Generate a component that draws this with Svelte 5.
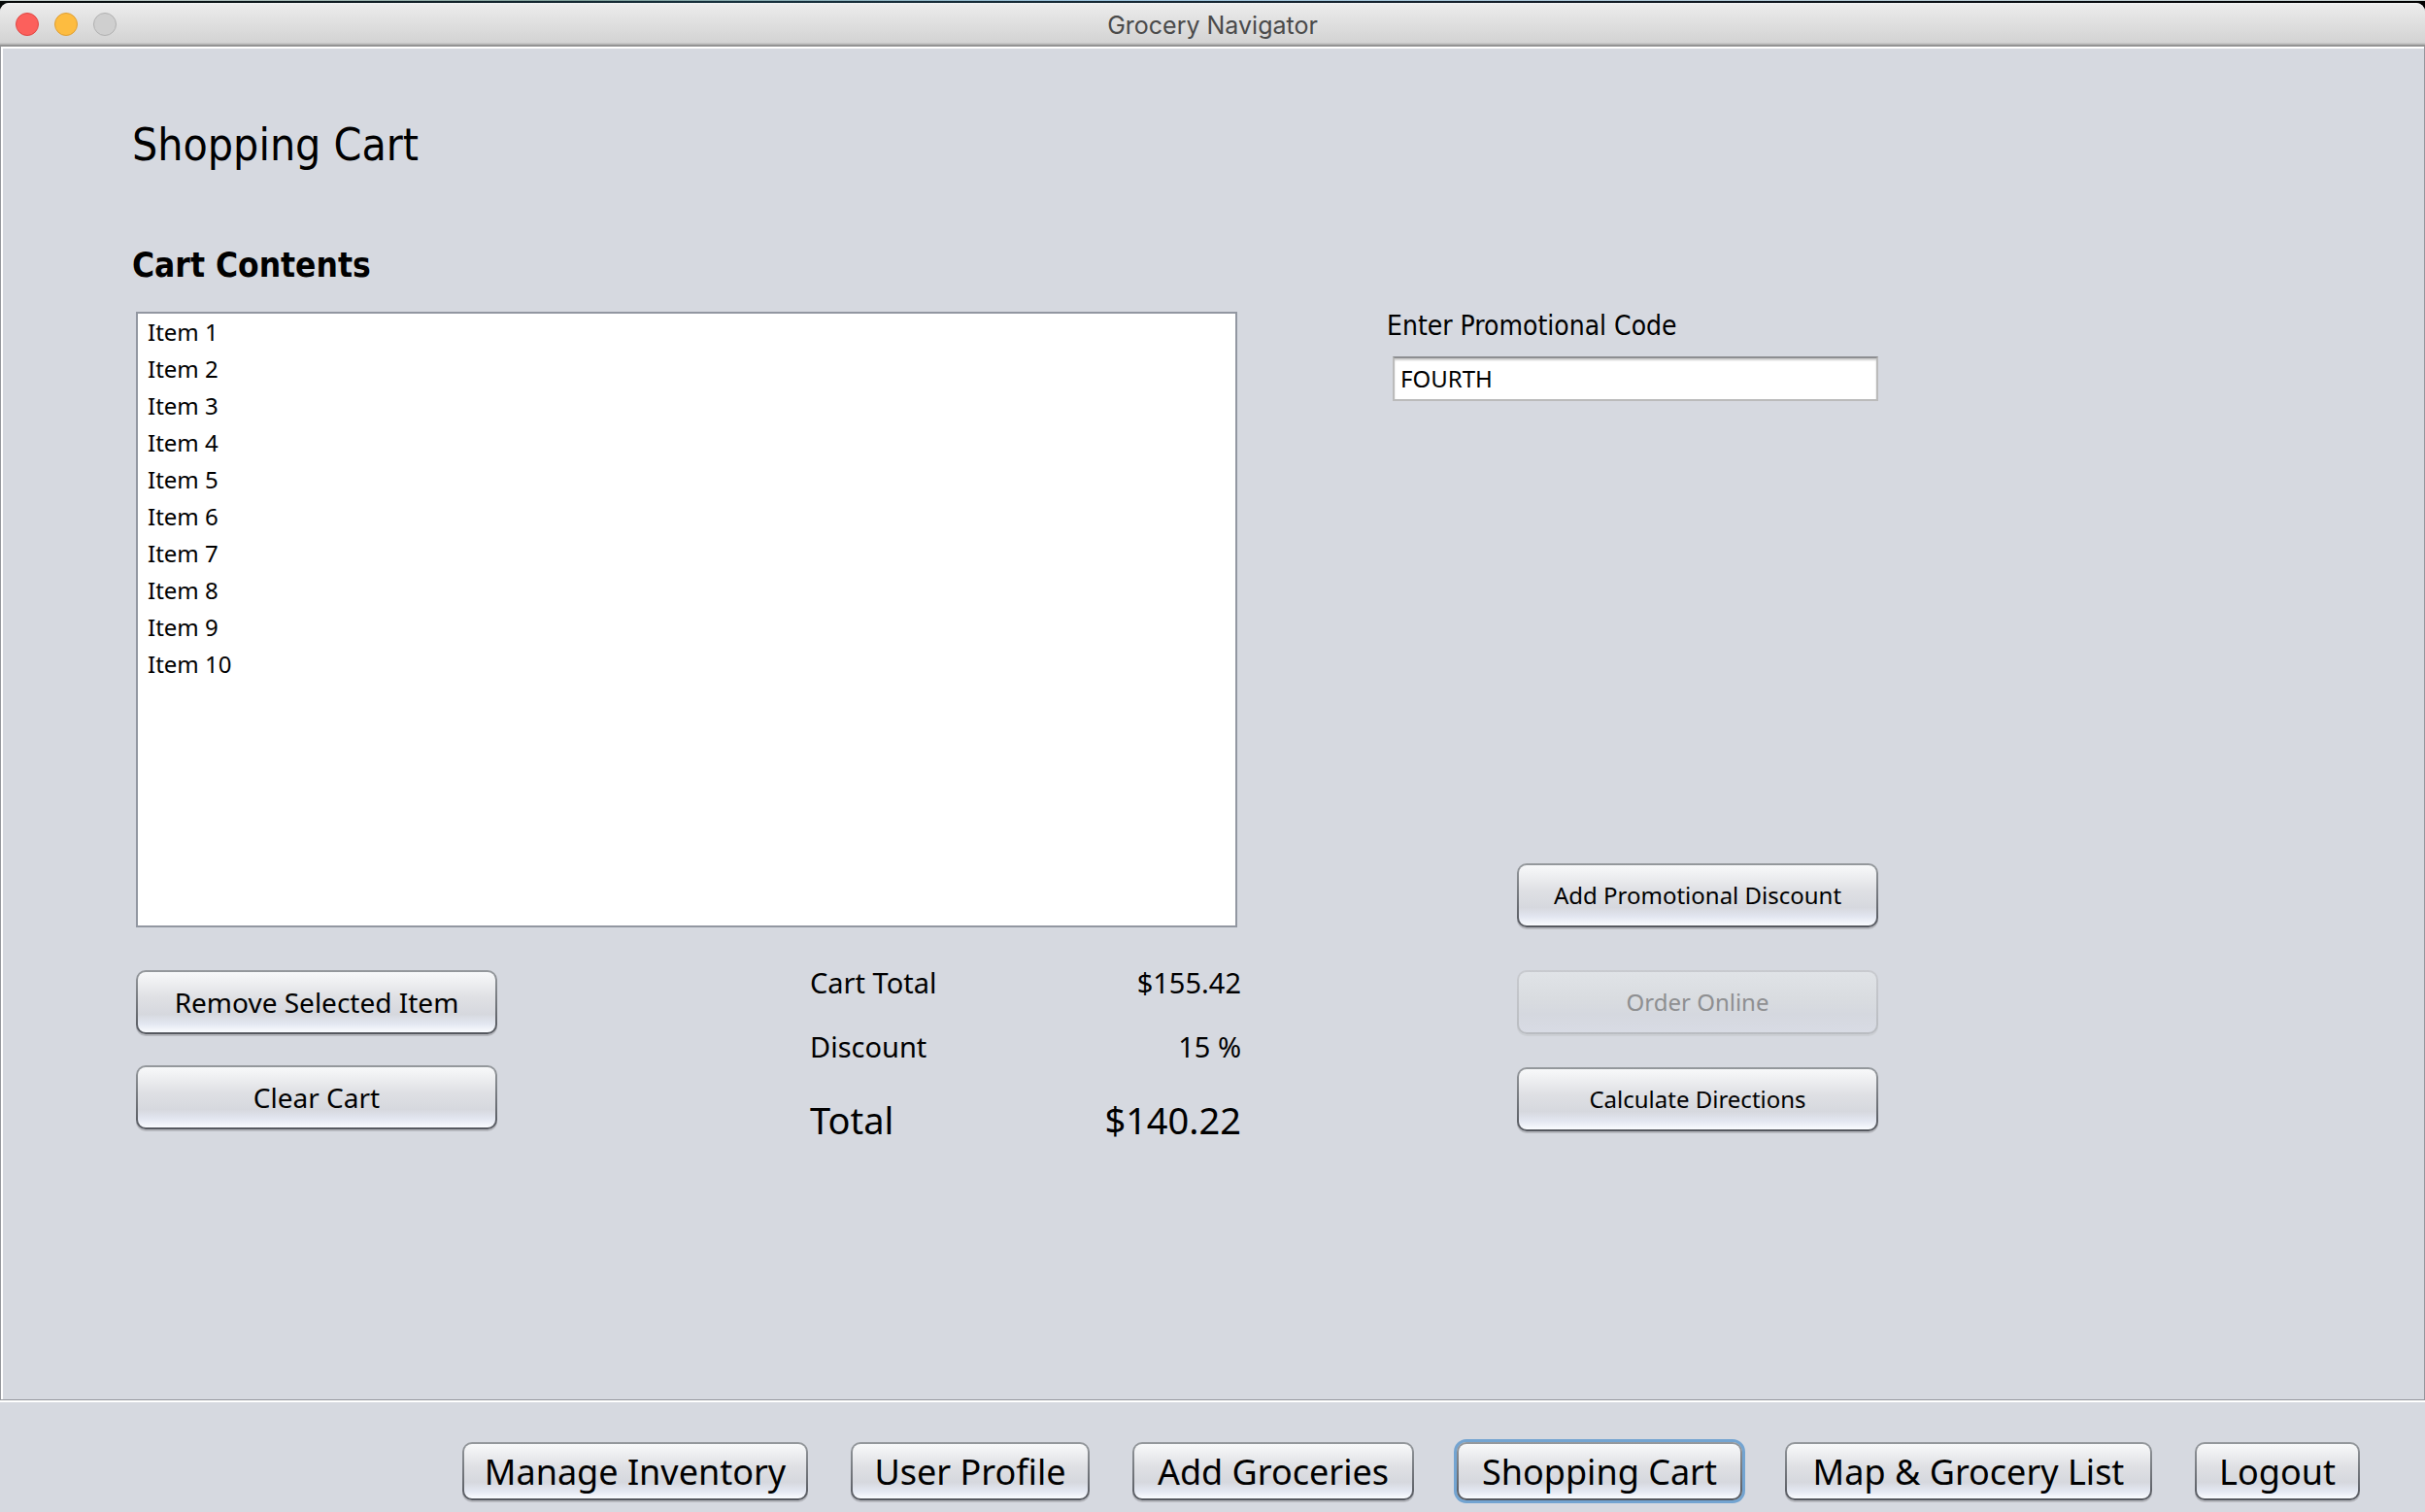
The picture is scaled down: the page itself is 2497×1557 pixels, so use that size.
<script>
  const items = Array.from({ length: 10 }, (_, i) => `Item ${i + 1}`);
  const totals = [
    { label: 'Cart Total', value: '$155.42' },
    { label: 'Discount', value: '15 %' },
    { label: 'Total', value: '$140.22', grand: true }
  ];
  const tabs = [
    { label: 'Manage Inventory', width: 356 },
    { label: 'User Profile', width: 246 },
    { label: 'Add Groceries', width: 290 },
    { label: 'Shopping Cart', width: 294 },
    { label: 'Map & Grocery List', width: 378 },
    { label: 'Logout', width: 170 }
  ];
  let current = $state('Shopping Cart');
  let selected = $state('');
  let code = $state('FOURTH');
</script>

<div class="desktop">
  <div class="window">
    <header class="titlebar">
      <div class="lights">
        <button class="light close" aria-label="Close"></button>
        <button class="light minimize" aria-label="Minimize"></button>
        <button class="light zoom" aria-label="Zoom" disabled></button>
      </div>
      <div class="title">Grocery Navigator</div>
    </header>

    <main class="panel">
      <h1>Shopping Cart</h1>
      <h2 id="contents">Cart Contents</h2>

      <div class="layout">
        <ul class="list" role="listbox" aria-labelledby="contents">
          {#each items as item}
            <!-- svelte-ignore a11y_click_events_have_key_events -->
            <li
              role="option"
              tabindex="-1"
              aria-selected={selected === item}
              class:selected={selected === item}
              onclick={() => (selected = item)}
            >{item}</li>
          {/each}
        </ul>

        <div class="promo">
          <label for="code">Enter Promotional Code</label>
          <input id="code" type="text" bind:value={code} />
          <button class="btn small add">Add Promotional Discount</button>
        </div>

        <div class="summary">
          <div class="stack">
            <button class="btn">Remove Selected Item</button>
            <button class="btn">Clear Cart</button>
          </div>
          <dl class="totals">
            {#each totals as t}
              <div class="total" class:grand={t.grand}>
                <dt>{t.label}</dt>
                <dd>{t.value}</dd>
              </div>
            {/each}
          </dl>
        </div>

        <div class="stack checkout">
          <button class="btn small" disabled>Order Online</button>
          <button class="btn small">Calculate Directions</button>
        </div>
      </div>
    </main>

    <nav class="tabs" aria-label="Sections">
      {#each tabs as tab}
        <button
          class="btn tab"
          class:focused={current === tab.label}
          style:width="{tab.width}px"
          onclick={() => (current = tab.label)}
        >{tab.label}</button>
      {/each}
    </nav>
  </div>
</div>

<style>
  :global(body) {
    margin: 0;
    background: #d6d9e0;
  }

  .desktop {
    box-sizing: border-box;
    min-height: 100vh;
    padding-top: 3px;
    display: flex;
    background:
      linear-gradient(90deg, #c9d2d0, #7fa09a 24%, #9cc3dd 45%, #c9d2d0) top / 100% 1px no-repeat,
      linear-gradient(90deg, #050808, #16303c 30%, #14202c 60%, #000) top / 100% 16px no-repeat,
      #d6d9e0;
    color: #000;
    font-family: 'Noto Sans', sans-serif;
  }

  .window {
    flex: 1;
    min-width: 0;
    display: flex;
    flex-direction: column;
    border-radius: 9px 9px 0 0;
    overflow: hidden;
    background: #d6d9e0;
  }

  .titlebar {
    box-sizing: border-box;
    height: 45px;
    display: grid;
    grid-template-columns: 1fr auto 1fr;
    align-items: center;
    padding: 0 16px;
    border-bottom: 2px solid #939393;
    background: linear-gradient(#f4f4f4, #ebebeb 2px, #d3d3d3 41px, #b9b9b9 42px);
  }

  .lights {
    display: flex;
    gap: 16px;
  }

  .light {
    box-sizing: border-box;
    width: 24px;
    height: 24px;
    padding: 0;
    border: 1px solid;
    border-radius: 50%;
  }

  .close {
    background: #fc605c;
    border-color: #df4744;
  }

  .minimize {
    background: #fdbc40;
    border-color: #de9f34;
  }

  .zoom {
    background: #cfcfcf;
    border-color: #b1b1b1;
  }

  .title {
    padding-top: 2px;
    color: #4a4a4a;
    font: 25px/32px Inter, sans-serif;
  }

  .panel {
    flex: 1;
    padding: 73px 0 40px 135px;
    border: solid #94969c;
    border-width: 0 1px 1px;
    box-shadow: inset 2px 2px #fff;
  }

  h1,
  h2 {
    margin: 0;
    font-family: 'DejaVu Sans Condensed', 'DejaVu Sans', sans-serif;
  }

  h1 {
    font-size: 46px;
    line-height: 56px;
    font-weight: 400;
  }

  h2 {
    margin: 74px 0 26px;
    font-size: 35px;
    line-height: 44px;
    font-weight: 700;
  }

  .layout {
    display: grid;
    grid-template-columns: 1134fr 506fr 408fr;
    gap: 44px 154px;
    padding-left: 4px;
  }

  .list,
  .summary {
    grid-column: 1;
  }

  .promo,
  .checkout {
    grid-column: 2;
  }

  .list {
    box-sizing: border-box;
    min-height: 634px;
    margin: 0;
    padding: 0 0 20px;
    border: 2px solid #9297a1;
    background: #fff;
    list-style: none;
    font-size: 24px;
    line-height: 38px;
  }

  .list li {
    padding: 0 10px;
  }

  .list li.selected {
    background: #39698a;
    color: #fff;
  }

  .promo {
    display: flex;
    flex-direction: column;
  }

  label {
    font: 28px/30px 'DejaVu Sans Condensed', 'DejaVu Sans', sans-serif;
  }

  input {
    box-sizing: border-box;
    height: 46px;
    margin: 16px 0 0 6px;
    padding: 0 6px 2px;
    border: 2px solid #bbb;
    border-top-color: #8d8e91;
    border-radius: 0;
    outline: none;
    background: #fff;
    box-shadow: inset 0 2px 2px #ccc;
    color: #000;
    font: 24px 'Noto Sans', sans-serif;
  }

  .btn {
    box-sizing: border-box;
    width: 372px;
    height: 66px;
    padding: 0;
    border: 2px solid transparent;
    border-radius: 10px;
    background:
      linear-gradient(#f8f9fa, #dfe0e4 42%, #d6d8de 70%, #e3e7f1 86%, #fafcff) padding-box,
      linear-gradient(#95999d, #55585f) border-box;
    box-shadow: 0 2px #b5b7bd;
    color: #000;
    font: 28px 'Noto Sans', sans-serif;
    white-space: nowrap;
  }

  .btn.small {
    padding-bottom: 2px;
    font-size: 24px;
  }

  .btn:disabled {
    background:
      linear-gradient(#e0e3e7, #d9dce0 45%, #d5d8df 70%, #d8dbe4) padding-box,
      linear-gradient(#c8cacf, #b9bcc1) border-box;
    box-shadow: 0 2px #cccfd4;
    color: #8e8f91;
  }

  .add {
    margin: auto 0 0 auto;
  }

  .summary {
    display: flex;
    justify-content: space-between;
  }

  .stack {
    display: flex;
    flex-direction: column;
    gap: 32px;
  }

  .checkout {
    align-items: flex-end;
    gap: 34px;
  }

  .totals {
    width: 444px;
    margin: -7px -4px 0 0;
    display: flex;
    flex-direction: column;
    gap: 26px;
    font-size: 29px;
    line-height: 40px;
  }

  .total {
    display: flex;
    justify-content: space-between;
  }

  .grand {
    font-size: 38px;
    line-height: 58px;
  }

  dd {
    margin: 0;
  }

  .tabs {
    display: flex;
    flex-wrap: wrap;
    justify-content: flex-end;
    gap: 20px 44px;
    padding: 41px 67px 12px;
    border-top: 2px solid #fff;
  }

  .btn.tab {
    height: 60px;
    padding-top: 2px;
    font-size: 36px;
    line-height: 48px;
  }

  .focused {
    box-shadow: 0 0 0 3px #73a4d1;
  }
</style>
